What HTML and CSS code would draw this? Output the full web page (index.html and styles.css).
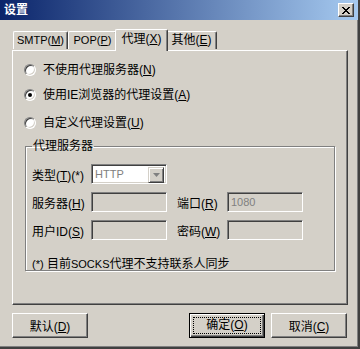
FILE: index.html
```html
<!DOCTYPE html>
<html>
<head>
  <title>设置</title>
  <link rel="stylesheet" href="styles.css">
</head>
<body>
  <div class="window">
    <div class="titlebar">
      <span class="title">设置</span>
      <span class="close-btn">
        <svg width="8" height="7" viewBox="0 0 8 7">
          <path d="M0 0 L7 7 M1 0 L8 7 M7 0 L0 7 M8 0 L1 7" stroke="#000" stroke-width="1" fill="none"/>
        </svg>
      </span>
    </div>

    <div class="tabs">
      <div class="tab tab-smtp"><span class="en">SMTP(<u>M</u>)</span></div>
      <div class="tab tab-pop"><span class="en">POP(<u>P</u>)</span></div>
      <div class="tab tab-proxy active">代理(<u>X</u>)</div>
      <div class="tab tab-other">其他(<u>E</u>)</div>
    </div>

    <div class="panel">
      <div class="radios">
        <label class="radio-row"><span class="radio"></span>不使用代理服务器(<u>N</u>)</label>
        <label class="radio-row"><span class="radio checked"></span>使用IE浏览器的代理设置(<u>A</u>)</label>
        <label class="radio-row third"><span class="radio"></span>自定义代理设置(<u>U</u>)</label>
      </div>

      <fieldset class="group">
        <legend>代理服务器</legend>
        <div class="form-grid">
          <span class="lbl">类型(<u>T</u>)(*)</span>
          <div class="select">
            <span class="select-value">HTTP</span>
            <span class="select-arrow">
              <svg width="7" height="4" viewBox="0 0 7 4"><path d="M0 0 H7 L3.5 4 Z" fill="#808080"/></svg>
            </span>
          </div>
          <span></span>
          <span></span>
          <span></span>

          <span class="lbl">服务器(<u>H</u>)</span>
          <div class="field"></div>
          <span></span>
          <span class="lbl">端口(<u>R</u>)</span>
          <div class="field">1080</div>

          <span class="lbl">用户ID(<u>S</u>)</span>
          <div class="field"></div>
          <span></span>
          <span class="lbl">密码(<u>W</u>)</span>
          <div class="field"></div>
        </div>
        <p class="note"><span class="en">(*)</span> 目前<span class="en">SOCKS</span>代理不支持联系人同步</p>
      </fieldset>
    </div>

    <div class="buttons">
      <button class="btn">默认(<u>D</u>)</button>
      <div class="btn-group">
        <button class="btn default"><span class="focus">确定(<u>O</u>)</span></button>
        <button class="btn">取消(<u>C</u>)</button>
      </div>
    </div>
  </div>
</body>
</html>
```

FILE: styles.css
```css
body {
  margin: 0;
  font-family: Tahoma, "Liberation Sans", "Noto Sans CJK SC", sans-serif;
  font-size: 12px;
  color: #000;
  background-color: #d4d0c8;
}

u {
  text-decoration: underline;
  text-underline-offset: 1px;
}

.en {
  font-size: 11px;
}

.window {
  width: 360px;
  height: 349px;
  box-sizing: border-box;
  background-color: #d4d0c8;
  border-right: 2px solid #404040;
  border-bottom: 2px solid #404040;
  box-shadow: inset -1px -1px 0 #808080;
}

.titlebar {
  height: 20px;
  display: flex;
  align-items: center;
  justify-content: space-between;
  padding: 0 4px 0 4px;
  background: linear-gradient(to right, #0a246a, #a6caf0);
}

.title {
  color: #fff;
  font-weight: bold;
  font-size: 12px;
  line-height: 14px;
}

.close-btn {
  width: 16px;
  height: 14px;
  box-sizing: border-box;
  display: flex;
  align-items: center;
  justify-content: center;
  background-color: #d4d0c8;
  border-top: 1px solid #fff;
  border-left: 1px solid #fff;
  border-right: 1px solid #404040;
  border-bottom: 1px solid #404040;
  box-shadow: inset -1px -1px 0 #808080;
}

/* tabs */
.tabs {
  display: flex;
  align-items: flex-end;
  height: 22px;
  margin-top: 8px;
  padding-left: 13px;
  position: relative;
  z-index: 1;
}

.tab {
  height: 18px;
  box-sizing: border-box;
  line-height: 16px;
  text-align: center;
  white-space: nowrap;
  margin-bottom: 1px;
  border-top: 1px solid #fff;
  border-left: 1px solid #fff;
  border-right: 1px solid #404040;
  border-radius: 2px 2px 0 0;
  box-shadow: inset -1px 0 0 #808080;
  background-color: #d4d0c8;
}

.tab-smtp { width: 55px; }
.tab-pop { width: 49px; }
.tab-proxy { width: 49px; }
.tab-other { width: 51px; }

.tab.active {
  height: 22px;
  width: 53px;
  margin: 0 -2px 0 -2px;
  line-height: 19px;
  position: relative;
  z-index: 2;
  margin-bottom: -1px;
}

.panel {
  margin-left: 12px;
  width: 336px;
  height: 255px;
  box-sizing: border-box;
  border-top: 1px solid #fff;
  border-left: 1px solid #fff;
  border-right: 1px solid #404040;
  border-bottom: 1px solid #404040;
  box-shadow: inset -1px -1px 0 #808080;
  padding: 11px 0 0 11px;
}

/* radio buttons */
.radios {
  display: flex;
  flex-direction: column;
}

.radio-row {
  display: flex;
  align-items: center;
  height: 16px;
  margin-bottom: 9px;
  line-height: 16px;
}

.radio-row.third {
  margin-top: 3px;
  margin-bottom: 0;
}

.radio {
  width: 12px;
  height: 12px;
  box-sizing: border-box;
  border-radius: 50%;
  background-color: #fff;
  border-top: 1px solid #808080;
  border-left: 1px solid #808080;
  border-right: 1px solid #fff;
  border-bottom: 1px solid #fff;
  box-shadow: inset 1px 1px 0 #404040, inset -1px -1px 0 #d4d0c8;
  margin-right: 7px;
  display: flex;
  align-items: center;
  justify-content: center;
}

.radio.checked::after {
  content: "";
  width: 4px;
  height: 4px;
  border-radius: 50%;
  background-color: #000;
}

/* group box */
.group {
  margin: 8px 0 0 1px;
  width: 310px;
  height: 132px;
  box-sizing: border-box;
  border: 1px solid #808080;
  box-shadow: inset 1px 1px 0 #fff, 1px 1px 0 #fff;
  padding: 11px 0 0 6px;
}

.group legend {
  padding: 0 1px;
  margin-left: 0;
  line-height: 14px;
}

.form-grid {
  display: grid;
  grid-template-columns: 59px 76px 10px 50px 76px;
  grid-auto-rows: 20px;
  row-gap: 8px;
  align-items: center;
}

.lbl {
  white-space: nowrap;
}

.field,
.select {
  height: 20px;
  box-sizing: border-box;
  border-top: 1px solid #808080;
  border-left: 1px solid #808080;
  border-right: 1px solid #fff;
  border-bottom: 1px solid #fff;
  box-shadow: inset 1px 1px 0 #404040, inset -1px -1px 0 #d4d0c8;
  background-color: #d4d0c8;
  color: #808080;
  padding: 0 3px;
  line-height: 18px;
  font-size: 11px;
}

.select {
  background-color: #fff;
  display: flex;
  justify-content: space-between;
  padding: 2px 2px 2px 3px;
  line-height: 14px;
}

.select-arrow {
  width: 16px;
  height: 16px;
  box-sizing: border-box;
  display: flex;
  align-items: center;
  justify-content: center;
  background-color: #d4d0c8;
  border-top: 1px solid #d4d0c8;
  border-left: 1px solid #d4d0c8;
  border-right: 1px solid #404040;
  border-bottom: 1px solid #404040;
  box-shadow: inset 1px 1px 0 #fff, inset -1px -1px 0 #808080;
}

.note {
  margin: 17px 0 0 0;
  line-height: 14px;
}

/* bottom buttons */
.buttons {
  display: flex;
  justify-content: space-between;
  padding: 8px 11px 0 12px;
}

.btn-group {
  display: flex;
  gap: 6px;
}

.btn {
  width: 76px;
  height: 25px;
  box-sizing: border-box;
  font-family: inherit;
  font-size: 12px;
  background-color: #d4d0c8;
  border-top: 1px solid #fff;
  border-left: 1px solid #fff;
  border-right: 1px solid #404040;
  border-bottom: 1px solid #404040;
  box-shadow: inset -1px -1px 0 #808080;
  padding: 0;
  color: #000;
}

.btn.default {
  border: 1px solid #000;
  box-shadow: inset 1px 1px 0 #fff, inset -1px -1px 0 #404040, inset -2px -2px 0 #808080;
  padding: 3px;
}

.btn .focus {
  display: block;
  height: 100%;
  box-sizing: border-box;
  border: 1px dotted #000;
  line-height: 15px;
}
```
